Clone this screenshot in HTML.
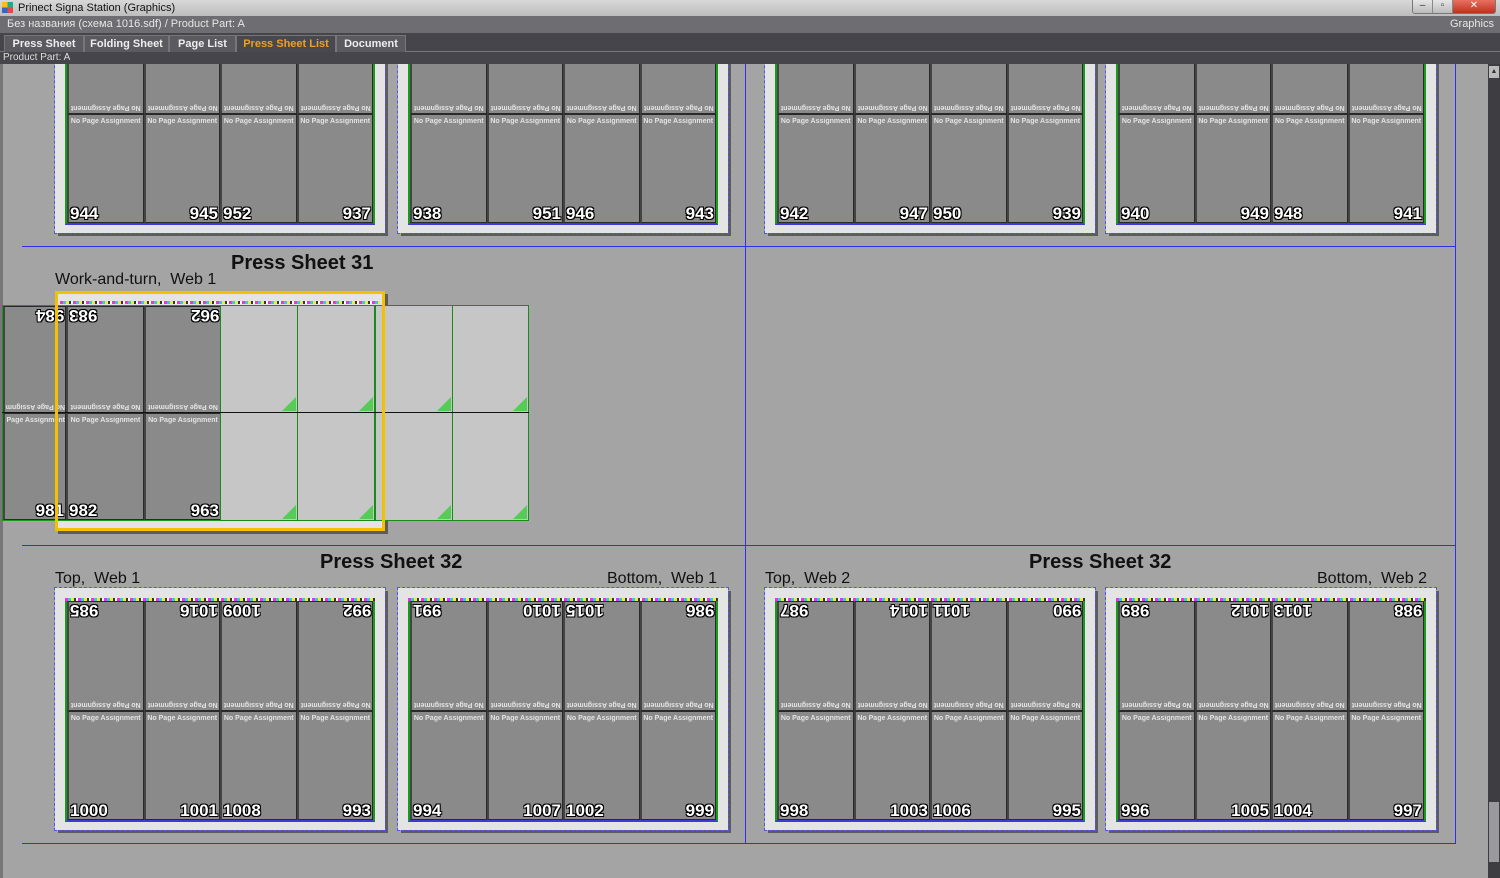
<!DOCTYPE html>
<html><head><meta charset="utf-8">
<style>
*{margin:0;padding:0;box-sizing:border-box}
body{width:1500px;height:878px;overflow:hidden;background:#a4a4a4;font-family:"Liberation Sans","Noto Sans CJK SC",sans-serif;position:relative}
#tb{position:absolute;left:0;top:0;width:1500px;height:16px;background:linear-gradient(#d8d8d8,#bdbdbd);font-size:11px;color:#111;line-height:16px;padding-left:18px}
#tb .ic{position:absolute;left:2px;top:2px;width:11px;height:11px;background:conic-gradient(#2a8 0 25%,#e44 0 50%,#36c 0 75%,#fb2 0)}
#wb{position:absolute;right:4px;top:0;height:14px;display:flex;border:1px solid #777;border-top:none;border-radius:0 0 3px 3px;overflow:hidden}
#wb div{width:20px;height:13px;background:linear-gradient(#e6e6e6,#bbb);border-right:1px solid #888;color:#333;font-size:10px;text-align:center;line-height:12px}
#wb .x{width:42px;background:linear-gradient(#e87060,#c03020);color:#fff;border:none}
#t2{position:absolute;left:0;top:16px;width:1500px;height:17px;background:#6e6e72;color:#e6e6e6;font-size:11px;line-height:17px;padding-left:7px}
#t2 span{position:absolute;right:6px}
#tabs{position:absolute;left:0;top:33px;width:1500px;height:19px;background:#45454b;border-bottom:1px solid #777}
.tab{position:absolute;top:2px;height:17px;background:#5a5a60;border:1px solid #777;border-bottom:none;color:#eee;font-size:11px;font-weight:bold;text-align:center;line-height:16px}
.tab.on{color:#f0a020;background:#48484e}
#pp{position:absolute;left:0;top:52px;width:1500px;height:12px;background:#45454b;color:#ddd;font-size:10px;line-height:12px;padding-left:3px}
#ct{position:absolute;left:0;top:64px;width:1488px;height:814px;overflow:hidden;background:#a4a4a4}
#sb{position:absolute;left:1488px;top:64px;width:12px;height:814px;background:#3e3e42}
.hl{position:absolute;height:1px;background:#2f2ff0}
.vl{position:absolute;width:1px;background:#2f2ff0}
.sh{position:absolute;width:330px;height:242px;background:#e4e4e4;outline:1px dashed #5555ee;box-shadow:3px 3px 0 #5c5c5c}
.cb{position:absolute;left:10px;top:10px;width:310px;height:3px;background:repeating-linear-gradient(90deg,#e3d 0 3px,#3cd 3px 6px,#ee3 6px 9px,#333 9px 11px,#fff 11px 13px)}
.pg{position:absolute;left:10px;top:13px;width:310px;height:221px;display:grid;grid-template-columns:repeat(4,1fr);grid-template-rows:1fr 1fr;border-left:2px solid #1a9a1a;border-right:2px solid #1a9a1a;border-bottom:2px solid #3a3ae0}
.c{background:#8a8a8a;border:1px solid #2a2a2a;position:relative;border-left:2px solid #444}
.na{position:absolute;left:0;width:100%;text-align:center;font-size:7px;font-weight:bold;color:#e4e4e4;white-space:nowrap;overflow:hidden}
.t .na{bottom:2px;transform:rotate(180deg)}
.b .na{top:3px}
.n{position:absolute;font-size:17px;font-weight:bold;color:#fff;text-shadow:-1px -1px 0 #000,1px -1px 0 #000,-1px 1px 0 #000,1px 1px 0 #000;line-height:17px}
.b .n{bottom:0}
.t .n{top:0;transform:rotate(180deg)}
.l{left:1px}.r{right:1px}
.ttl{position:absolute;font-size:20px;font-weight:bold;color:#111}
.sub{position:absolute;font-size:16px;color:#111}
.lt{background:#c6c6c6;border:1px solid #1a8a1a;border-left:1px solid #1a8a1a;position:absolute}
.tri{position:absolute;right:1px;bottom:1px;width:0;height:0;border-left:14px solid transparent;border-bottom:14px solid #5c5}
</style></head><body>
<div id="tb"><div class="ic"></div>Prinect Signa Station (Graphics)
<div id="wb"><div>–</div><div>▫</div><div class="x">✕</div></div></div>
<div id="t2">Без названия (схема 1016.sdf) / Product Part: A<span>Graphics</span></div>
<div id="tabs">
<div class="tab" style="left:4px;width:80px">Press Sheet</div>
<div class="tab" style="left:84px;width:85px">Folding Sheet</div>
<div class="tab" style="left:169px;width:67px">Page List</div>
<div class="tab on" style="left:236px;width:100px">Press Sheet List</div>
<div class="tab" style="left:336px;width:70px">Document</div>
</div>
<div id="pp">Product Part: A</div>
<div id="ct">
<div style="position:absolute;left:0;top:0;width:3px;height:814px;background:#777"></div>
<div class="hl" style="left:22px;top:182px;width:1433px"></div>
<div class="hl" style="left:22px;top:481px;width:1433px"></div>
<div class="hl" style="left:22px;top:779px;width:1433px"></div>
<div class="vl" style="left:745px;top:0;height:780px"></div>
<div class="vl" style="left:1455px;top:0;height:780px"></div>

<!-- Row 1 -->
<div class="sh" style="left:55px;top:-73px"><div class="cb"></div><div class="pg">
<div class="c t"><div class="na">No Page Assignment</div></div><div class="c t"><div class="na">No Page Assignment</div></div><div class="c t"><div class="na">No Page Assignment</div></div><div class="c t"><div class="na">No Page Assignment</div></div>
<div class="c b"><div class="na">No Page Assignment</div><div class="n l">944</div></div><div class="c b"><div class="na">No Page Assignment</div><div class="n r">945</div></div><div class="c b"><div class="na">No Page Assignment</div><div class="n l">952</div></div><div class="c b"><div class="na">No Page Assignment</div><div class="n r">937</div></div>
</div></div>
<div class="sh" style="left:398px;top:-73px"><div class="cb"></div><div class="pg">
<div class="c t"><div class="na">No Page Assignment</div></div><div class="c t"><div class="na">No Page Assignment</div></div><div class="c t"><div class="na">No Page Assignment</div></div><div class="c t"><div class="na">No Page Assignment</div></div>
<div class="c b"><div class="na">No Page Assignment</div><div class="n l">938</div></div><div class="c b"><div class="na">No Page Assignment</div><div class="n r">951</div></div><div class="c b"><div class="na">No Page Assignment</div><div class="n l">946</div></div><div class="c b"><div class="na">No Page Assignment</div><div class="n r">943</div></div>
</div></div>
<div class="sh" style="left:765px;top:-73px"><div class="cb"></div><div class="pg">
<div class="c t"><div class="na">No Page Assignment</div></div><div class="c t"><div class="na">No Page Assignment</div></div><div class="c t"><div class="na">No Page Assignment</div></div><div class="c t"><div class="na">No Page Assignment</div></div>
<div class="c b"><div class="na">No Page Assignment</div><div class="n l">942</div></div><div class="c b"><div class="na">No Page Assignment</div><div class="n r">947</div></div><div class="c b"><div class="na">No Page Assignment</div><div class="n l">950</div></div><div class="c b"><div class="na">No Page Assignment</div><div class="n r">939</div></div>
</div></div>
<div class="sh" style="left:1106px;top:-73px"><div class="cb"></div><div class="pg">
<div class="c t"><div class="na">No Page Assignment</div></div><div class="c t"><div class="na">No Page Assignment</div></div><div class="c t"><div class="na">No Page Assignment</div></div><div class="c t"><div class="na">No Page Assignment</div></div>
<div class="c b"><div class="na">No Page Assignment</div><div class="n l">940</div></div><div class="c b"><div class="na">No Page Assignment</div><div class="n r">949</div></div><div class="c b"><div class="na">No Page Assignment</div><div class="n l">948</div></div><div class="c b"><div class="na">No Page Assignment</div><div class="n r">941</div></div>
</div></div>

<!-- Row 2 -->
<div class="ttl" style="left:231px;top:188px">Press Sheet 31</div>
<div class="sub" style="left:55px;top:207px">Work-and-turn,&nbsp; Web 1</div>
<div style="position:absolute;left:55px;top:227px;width:330px;height:240px;background:#e4e4e4;border:3px solid #f2c200;box-shadow:3px 3px 0 #5c5c5c"></div>
<div class="cb" style="left:60px;top:237px;width:320px"></div>
<div style="position:absolute;left:2px;top:241px;width:218px;height:216px;display:grid;grid-template-columns:63px 78px 77px;grid-template-rows:1fr 1fr;border:1px solid #1a9a1a">
<div class="c t"><div class="na" style="text-align:left">No Page Assignm</div><div class="n r" style="left:auto;right:1px">984</div></div>
<div class="c t"><div class="na">No Page Assignment</div><div class="n l">983</div></div>
<div class="c t"><div class="na">No Page Assignment</div><div class="n r">962</div></div>
<div class="c b"><div class="na" style="text-align:right">Page Assignment</div><div class="n r">981</div></div>
<div class="c b"><div class="na">No Page Assignment</div><div class="n l">982</div></div>
<div class="c b"><div class="na">No Page Assignment</div><div class="n r">963</div></div>
</div>
<div class="lt" style="left:220px;top:241px;width:78px;height:108px"><div class="tri"></div></div>
<div class="lt" style="left:297px;top:241px;width:78px;height:108px"><div class="tri"></div></div>
<div class="lt" style="left:375px;top:241px;width:78px;height:108px"><div class="tri"></div></div>
<div class="lt" style="left:452px;top:241px;width:77px;height:108px"><div class="tri"></div></div>
<div class="lt" style="left:220px;top:348px;width:78px;height:109px"><div class="tri"></div></div>
<div class="lt" style="left:297px;top:348px;width:78px;height:109px"><div class="tri"></div></div>
<div class="lt" style="left:375px;top:348px;width:78px;height:109px"><div class="tri"></div></div>
<div class="lt" style="left:452px;top:348px;width:77px;height:109px"><div class="tri"></div></div>
<div style="position:absolute;left:2px;top:348px;width:527px;height:1px;background:#111"></div>
<div style="position:absolute;left:55px;top:227px;width:330px;height:240px;border:3px solid #f2c200"></div>

<!-- Row 3 -->
<div class="ttl" style="left:320px;top:487px">Press Sheet 32</div>
<div class="sub" style="left:55px;top:506px">Top,&nbsp; Web 1</div>
<div class="sub" style="left:607px;top:506px">Bottom,&nbsp; Web 1</div>
<div class="ttl" style="left:1029px;top:487px">Press Sheet 32</div>
<div class="sub" style="left:765px;top:506px">Top,&nbsp; Web 2</div>
<div class="sub" style="left:1317px;top:506px">Bottom,&nbsp; Web 2</div>

<div class="sh" style="left:55px;top:524px"><div class="cb"></div><div class="pg">
<div class="c t"><div class="na">No Page Assignment</div><div class="n l">985</div></div><div class="c t"><div class="na">No Page Assignment</div><div class="n r">1016</div></div><div class="c t"><div class="na">No Page Assignment</div><div class="n l">1009</div></div><div class="c t"><div class="na">No Page Assignment</div><div class="n r">992</div></div>
<div class="c b"><div class="na">No Page Assignment</div><div class="n l">1000</div></div><div class="c b"><div class="na">No Page Assignment</div><div class="n r">1001</div></div><div class="c b"><div class="na">No Page Assignment</div><div class="n l">1008</div></div><div class="c b"><div class="na">No Page Assignment</div><div class="n r">993</div></div>
</div></div>
<div class="sh" style="left:398px;top:524px"><div class="cb"></div><div class="pg">
<div class="c t"><div class="na">No Page Assignment</div><div class="n l">991</div></div><div class="c t"><div class="na">No Page Assignment</div><div class="n r">1010</div></div><div class="c t"><div class="na">No Page Assignment</div><div class="n l">1015</div></div><div class="c t"><div class="na">No Page Assignment</div><div class="n r">986</div></div>
<div class="c b"><div class="na">No Page Assignment</div><div class="n l">994</div></div><div class="c b"><div class="na">No Page Assignment</div><div class="n r">1007</div></div><div class="c b"><div class="na">No Page Assignment</div><div class="n l">1002</div></div><div class="c b"><div class="na">No Page Assignment</div><div class="n r">999</div></div>
</div></div>
<div class="sh" style="left:765px;top:524px"><div class="cb"></div><div class="pg">
<div class="c t"><div class="na">No Page Assignment</div><div class="n l">987</div></div><div class="c t"><div class="na">No Page Assignment</div><div class="n r">1014</div></div><div class="c t"><div class="na">No Page Assignment</div><div class="n l">1011</div></div><div class="c t"><div class="na">No Page Assignment</div><div class="n r">990</div></div>
<div class="c b"><div class="na">No Page Assignment</div><div class="n l">998</div></div><div class="c b"><div class="na">No Page Assignment</div><div class="n r">1003</div></div><div class="c b"><div class="na">No Page Assignment</div><div class="n l">1006</div></div><div class="c b"><div class="na">No Page Assignment</div><div class="n r">995</div></div>
</div></div>
<div class="sh" style="left:1106px;top:524px"><div class="cb"></div><div class="pg">
<div class="c t"><div class="na">No Page Assignment</div><div class="n l">989</div></div><div class="c t"><div class="na">No Page Assignment</div><div class="n r">1012</div></div><div class="c t"><div class="na">No Page Assignment</div><div class="n l">1013</div></div><div class="c t"><div class="na">No Page Assignment</div><div class="n r">988</div></div>
<div class="c b"><div class="na">No Page Assignment</div><div class="n l">996</div></div><div class="c b"><div class="na">No Page Assignment</div><div class="n r">1005</div></div><div class="c b"><div class="na">No Page Assignment</div><div class="n l">1004</div></div><div class="c b"><div class="na">No Page Assignment</div><div class="n r">997</div></div>
</div></div>
</div>
<div id="sb">
<div style="position:absolute;left:1px;top:2px;width:10px;height:12px;background:#bbb;color:#333;font-size:7px;text-align:center;line-height:12px">▲</div>
<div style="position:absolute;left:1px;top:738px;width:10px;height:60px;background:#9a9a9e"></div>
</div>
</body></html>
